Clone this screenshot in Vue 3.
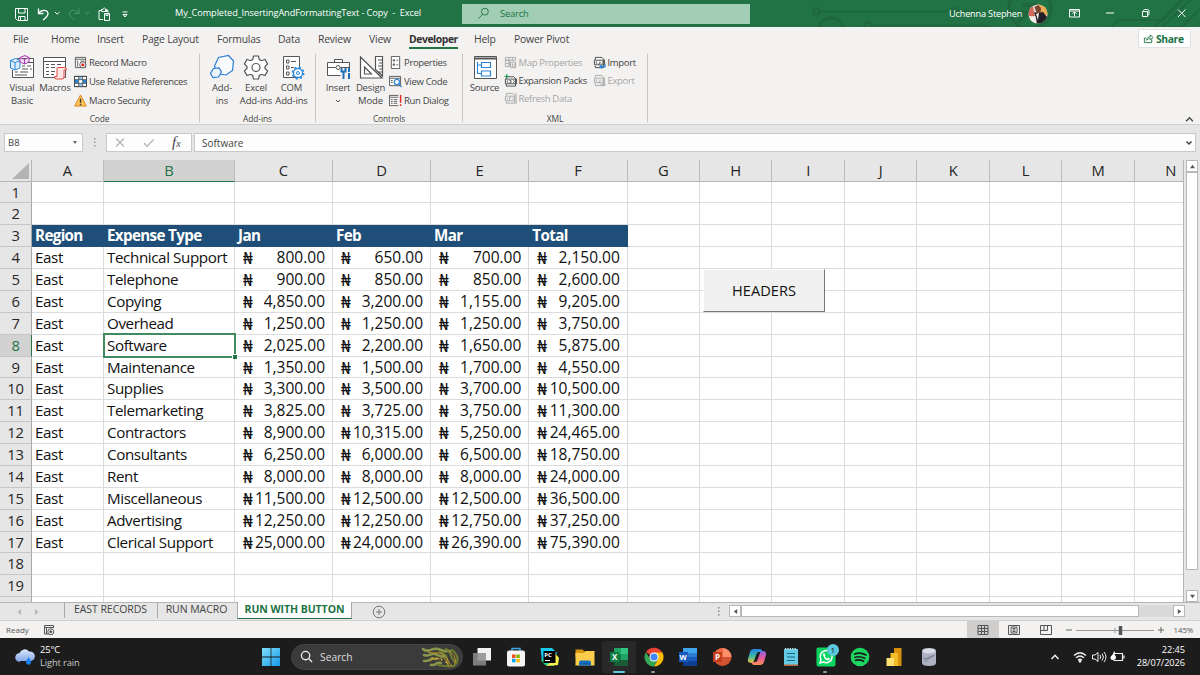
<script setup>
const menu = ['File', 'Home', 'Insert', 'Page Layout', 'Formulas', 'Data', 'Review', 'View', 'Developer', 'Help', 'Power Pivot']

const columns = ['A', 'B', 'C', 'D', 'E', 'F', 'G', 'H', 'I', 'J', 'K', 'L', 'M', 'N']

const headings = ['Region', 'Expense Type', 'Jan', 'Feb', 'Mar', 'Total']

const expenses = [
  ['East', 'Technical Support', '800.00', '650.00', '700.00', '2,150.00'],
  ['East', 'Telephone', '900.00', '850.00', '850.00', '2,600.00'],
  ['East', 'Copying', '4,850.00', '3,200.00', '1,155.00', '9,205.00'],
  ['East', 'Overhead', '1,250.00', '1,250.00', '1,250.00', '3,750.00'],
  ['East', 'Software', '2,025.00', '2,200.00', '1,650.00', '5,875.00'],
  ['East', 'Maintenance', '1,350.00', '1,500.00', '1,700.00', '4,550.00'],
  ['East', 'Supplies', '3,300.00', '3,500.00', '3,700.00', '10,500.00'],
  ['East', 'Telemarketing', '3,825.00', '3,725.00', '3,750.00', '11,300.00'],
  ['East', 'Contractors', '8,900.00', '10,315.00', '5,250.00', '24,465.00'],
  ['East', 'Consultants', '6,250.00', '6,000.00', '6,500.00', '18,750.00'],
  ['East', 'Rent', '8,000.00', '8,000.00', '8,000.00', '24,000.00'],
  ['East', 'Miscellaneous', '11,500.00', '12,500.00', '12,500.00', '36,500.00'],
  ['East', 'Advertising', '12,250.00', '12,250.00', '12,750.00', '37,250.00'],
  ['East', 'Clerical Support', '25,000.00', '24,000.00', '26,390.00', '75,390.00'],
]

// rows 1-2 are empty, row 3 holds the headings, the data starts in row 4
const rows = Array.from({ length: 20 }, (_, i) => {
  const number = i + 1
  let cells = []
  if (number === 3) cells = headings
  else if (number > 3) cells = expenses[number - 4] || []
  return { number, cells }
})
</script>

<template>
  <div class="screen">
    <header class="titlebar">
      <svg class="titlebar__art" viewBox="0 0 400 27" fill="none" stroke="#1f673f" stroke-width="2">
        <circle cx="16.500" cy="11.500" r="3" />
        <path d="M20 11.500H180M71 25.500H188l14 10M205 11.500h30" />
        <circle cx="31" cy="31" r="13" stroke-width="3" />
        <circle cx="68" cy="26" r="3.500" />
        <circle cx="155" cy="11" r="3" />
        <circle cx="230" cy="8" r="21" stroke-width="3.500" />
        <path d="m218 22 16-16m-12-1h13v13" stroke-width="4" />
        <path d="m311 27 7-7h45l22-22M354 27l28-28M362 27l36-34M370 27h12l18-18" />
      </svg>
      <div class="quick">
        <svg viewBox="0 0 120 27" fill="none" stroke="#fff" stroke-width="1">
          <path d="M6 8.500h11.500V20.500H7.500L5.500 18.500V8.500zM8.500 8.500v4.500h6.500V8.500M8.500 20.500v-4h6.500v4M10.500 17v3" />
          <path d="M28.500 8.500v5h5M28.500 13.500c3-4.500 9-4 9.500 0 .3 2.500-2 4-5 6.500" stroke-width="1.300" />
          <path d="m45 12 2.200 2.200L49.500 12" />
          <g stroke="#4f9670"><path d="M69 8.500v5h-5M69 13.500c-3-4.500-9-4-9.500 0-.3 2.500 2 4 5 6.500" /><path d="m75 12 2.200 2.200L79.500 12" /></g>
          <path d="M92 10.500h-3v9h4M95 10.500h3v2M91.500 11.500v-2h1.500c0-2 2.500-2 2.500 0H97v2zM94.500 13.500h5v7h-5zM96 13.500v2h2v-2" />
          <path d="M112.500 12h5M113 14.500h4L115 17z" />
        </svg>
      </div>
      <div class="titlebar__name">My_Completed_InsertingAndFormattingText - Copy&nbsp; -&nbsp; Excel</div>
      <div class="titlebar__search">
        <svg viewBox="0 0 14 14" fill="none" stroke="#217346"><circle cx="8.500" cy="5" r="3.700" /><path d="M6 8 1.500 12.500" /></svg>
        <span>Search</span>
      </div>
      <div class="titlebar__user">Uchenna Stephen</div>
      <svg class="avatar" viewBox="0 0 20 20">
        <defs><clipPath id="face"><circle cx="10" cy="10" r="9.500" /></clipPath></defs>
        <g clip-path="url(#face)">
          <path fill="#e9d8cf" d="M0 0h20v20H0z" />
          <path fill="#ecac56" d="M9 0h11v11H11z" />
          <path fill="#d2685b" d="M0 3h5l2 9H0z" />
          <path fill="#231f27" d="m6 8 4 1 5-1 4 5v7H9l-1-6z" />
          <path fill="#76452f" d="M6.500 3 10 1l3 3-.5 5-3.500 1z" />
          <path fill="#f3eeec" d="m8 10 3-1-1 7zM2 14l5-2 1 8H2z" />
        </g>
      </svg>
      <svg class="window-buttons" viewBox="0 0 134 27" fill="none" stroke="#fff">
        <path d="M3.500 9.500h10v7.500h-10zM3.500 11h10M8.500 16v-4M6.500 13.800l2-2 2 2M40 13h8" />
        <path d="M76.500 11.500h5v5h-5zM77.500 10.500q0-1 1-1h3q1.500 0 1.500 1.500v3q0 1-1 1M112 9.500l7.500 7.500M119.500 9.500 112 17" />
      </svg>
    </header>

    <nav class="menu">
      <span v-for="item in menu" :key="item" :class="{ 'menu__item--active': item === 'Developer' }">{{ item }}</span>
      <button type="button" class="share">
        <svg viewBox="0 0 12 12" fill="none" stroke="#217346"><path d="M3.500 5.500h-2v5h8V7M4 8c0-3 2-4 4-4V2l3 3-3 2.500V6C6.500 6 5 6.500 4 8z" /></svg>
        Share
      </button>
    </nav>

    <section class="ribbon">
      <div class="group group--code">
        <div class="group__body">
          <div class="large large--vb">
            <svg viewBox="0 0 26 26" fill="none" stroke="#555">
              <path fill="#fff" d="M8 4.500h16.500v19H3.500V16" />
              <path d="M13 8.500h11M13 12h3m2 0h4M13 15h6m2 0h2M6 18h3m2 0h8M6 21h12" />
              <path fill="#d9edfb" stroke="#2b88d8" d="m1.500 6.500 5-2 4.500 2V14l-5 2-4.500-2zM1.500 6.500l4.500 2 5-2M6 8.500V16" />
              <path fill="#f2dff5" stroke="#a83cb5" d="m11 3.500 5-2 4 2V8l-4.500 2L11 8zM11 3.500l4.500 2 4.500-2M15.500 5.500V10" />
            </svg>
            <span>Visual<br />Basic</span>
          </div>
          <div class="large large--macros">
            <svg viewBox="0 0 26 26" fill="none" stroke="#555">
              <path fill="#fff" d="M1.500 3.500h22v20h-22zM1.500 7.500h22" />
              <path d="M4 10.500h3m2 0h4m2 0h4M4 13.500h3m2 0h4M4 17.500h3m2 0h4M4 20.500h3m2 0h3" />
              <path fill="#fde7e5" stroke="#e8453c" d="M15.500 13.500h7q2 0 2 2.500H22v7q0 2-2 2h-6q-1.500 0-1.500-2.500H15v-7q0-2 .5-2z" />
            </svg>
            <span>Macros</span>
          </div>
          <div class="list">
            <div>
              <svg viewBox="0 0 14 14" fill="none" stroke="#555"><path fill="#fff" d="M1.500 1.500h11v11h-11zM1.500 3.500h11M4 5.500v6M7 5.500h4M3 5.500h1" /><circle cx="9.500" cy="9.500" r="3.300" fill="#fff" /><circle cx="9.500" cy="9.500" r="1.700" fill="#e02b20" stroke="none" /></svg>
              Record Macro
            </div>
            <div>
              <svg viewBox="0 0 14 14" fill="none" stroke="#444"><path fill="#fff" d="M.5 1.500h13v11H.5z" /><path fill="#2b88d8" stroke="none" d="M.5 5h4v4h-4zM9.500 5h4v4h-4z" /><path fill="#8cc3ee" stroke="none" d="M5 1.500h4V5H5zM5 9h4v3.500H5z" /><path d="M.5 1.500h13v11H.5zM.5 5h13M.5 9h13M5 1.500v11M9.300 1.500v11" stroke-width=".8" /></svg>
              Use Relative References
            </div>
            <div>
              <svg viewBox="0 0 14 14"><path fill="#fcc65b" stroke="#e28018" d="m7 1 6.300 12H.7z" /><path stroke="#333" stroke-width="1.500" d="M7 5v4.500M7 10.500V12" /></svg>
              Macro Security
            </div>
          </div>
        </div>
        <div class="group__name">Code</div>
      </div>

      <div class="group group--addins">
        <div class="group__body">
          <div class="large large--add">
            <svg viewBox="0 0 26 26" fill="none" stroke="#2b7cd3" stroke-width="1.200"><path fill="#f8fbfe" d="m5.500 12 4-8.500 10-2 5 5.500-1 9.500-6.500 4.500-8-1z" /><path fill="#eef6fd" d="m4.500 14.500 5.500-.5 2.500 4-3 5-5.500.5-2.500-4z" /></svg>
            <span>Add-<br />ins</span>
          </div>
          <div class="large large--excel">
            <svg viewBox="0 0 26 26" fill="none" stroke="#555" stroke-width="1.200"><path fill="#fff" d="M10.500 2h5l.8 3.500 2.200 1.200L22 5.500l2.600 4.400L22 12.500v2l2.600 2.600L22 21.500l-3.500-1.200-2.200 1.200-.8 3.500h-5l-.8-3.500-2.200-1.200L4 21.500l-2.600-4.400L4 14.500v-2L1.400 9.900 4 5.500l3.500 1.200 2.200-1.200z" /><circle cx="13" cy="13.500" r="4" /></svg>
            <span>Excel<br />Add-ins</span>
          </div>
          <div class="large large--com">
            <svg viewBox="0 0 26 26" fill="none" stroke="#555"><path fill="#fff" d="M4.500 2.500h16v21h-16zM7.500 6h2.500v3H7.500zM7.500 12h2.500v3H7.500zM7.500 18h2.500v3H7.500zM12 7.500h5M12 13.500h3" /><g stroke="#2b88d8"><circle cx="19" cy="19" r="4.500" fill="#fff" stroke-width="1.300" /><circle cx="19" cy="19" r="1.500" /><circle cx="19" cy="19" r="5.700" stroke-dasharray="2.200 2.270" stroke-width="1.500" /></g></svg>
            <span>COM<br />Add-ins</span>
          </div>
        </div>
        <div class="group__name">Add-ins</div>
      </div>

      <div class="group group--controls">
        <div class="group__body">
          <div class="large large--insert">
            <svg viewBox="0 0 26 26" fill="none" stroke="#555"><path fill="#fff" d="M2.500 8.500h22v13h-22zM9.500 8.500v-3h8v3M2.500 13.500h8m5 0h9" /><circle cx="13" cy="13.500" r="2" /><path fill="#f3f2f1" stroke="none" d="M15.500 14h11v12h-11z" /><path stroke="#2171b5" stroke-width="2" d="M18.500 18v7M16.500 14v3.500h4V14M24 14v4M24 19v6" /></svg>
            <span>Insert</span>
            <svg class="caret" viewBox="0 0 6 4" fill="none" stroke="#555"><path d="m1 1 2 2 2-2" /></svg>
          </div>
          <div class="large large--design">
            <svg viewBox="0 0 26 26" fill="none" stroke="#555" stroke-width="1.200"><path fill="#fff" d="M2.500 3v21H24zM6.500 13v7h7zM17.500 2.500h7V22l-7-6.500zM20 6h4M21 9h3M20 12h4M21 15h3M20 18h4" /></svg>
            <span>Design<br />Mode</span>
          </div>
          <div class="list">
            <div>
              <svg viewBox="0 0 14 14" fill="none" stroke="#555"><path fill="#fff" d="M2.500.5h9v13h-9zM4.500 4h1.500v1.500H4.500zM4.500 8.500h1.500V10H4.500zM8 4.500h2M8 9.500h2" /></svg>
              Properties
            </div>
            <div>
              <svg viewBox="0 0 14 14" fill="none" stroke="#555"><path fill="#fff" d="M.5 1.500h12v10H.5zM.5 3.500h12M2 6h2M2 8h2" /><circle cx="8.500" cy="7.500" r="2.800" stroke="#2b88d8" fill="#fff" stroke-width="1.300" /><path stroke="#2b88d8" stroke-width="1.300" d="m10.500 9.500 3 3.500" /></svg>
              View Code
            </div>
            <div>
              <svg viewBox="0 0 14 14" fill="none" stroke="#555"><path fill="#fff" d="M10 1.500H.5v11H10M.5 3.500H10M2 6h2m1 0h4M2 8h2m1 0h4M2 10h2m1 0h4" /><path stroke="#e02b20" stroke-width="1.600" d="M12.500 1v8.500M12.500 11v2" /></svg>
              Run Dialog
            </div>
          </div>
        </div>
        <div class="group__name">Controls</div>
      </div>

      <div class="group group--xml">
        <div class="group__body">
          <div class="large large--source">
            <svg viewBox="0 0 26 26" fill="none" stroke="#555"><path fill="#fff" d="M2.500 2.500h22v22h-22z" /><path stroke-width="2" d="M2.500 4.500h22" /><path stroke="#2b88d8" stroke-width="1.200" d="M9.500 8.500h9v5h-9zM9.500 17h9v5h-9zM9.500 11h-4v8.500h4M5.500 11V8" /></svg>
            <span>Source</span>
          </div>
          <div class="list list--tight">
            <div class="disabled">
              <svg viewBox="0 0 14 14" fill="none" stroke="#aaa"><path d="M1.500 1.500h11v3h-11zM1.500 4.500h4v7h-4zM5.500 1.500v10M9 1.500v3M1.500 8h4M7 6.500h5.500v6H7zM9 8v4M11 8v4" /></svg>
              Map Properties
            </div>
            <div>
              <svg viewBox="0 0 14 14" fill="none" stroke="#444"><path fill="#fff" d="M2.500 5V3h8l2 2v8h-10v-2M1.500 5.500h12v5h-12zM4.500 7 3 8l1.500 1.500M6 9.500h1.500V7H6M10 7l1.500 1L10 9.500" /><path stroke="#159447" d="M3 0v5M.5 2.500h5" /></svg>
              Expansion Packs
            </div>
            <div class="disabled">
              <svg viewBox="0 0 14 14" fill="none" stroke="#aaa"><path d="M2.500 4V1.500h7l2 2V12h-9v-2M1.500 4.500h10v5h-10zM4 6 3 7l1 1M6 8.500V6h1.500M9 6l1 1-1 1M13 1v12" /></svg>
              Refresh Data
            </div>
          </div>
          <div class="list list--tight list--last">
            <div>
              <svg viewBox="0 0 14 14" fill="none" stroke="#444"><path fill="#fff" d="M2.500 4V1.500h7l2 2v9h-9v-2M1.500 4.500h11v5h-11zM4.500 6 3 7l1.500 1.500M6 8.500h1.500V6M9.500 6l1.500 1-1.500 1.500" /><path stroke="#2b88d8" stroke-width="1.300" d="M13 9v2.500H7.500M9.500 9.500l-2 2 2 2" /></svg>
              Import
            </div>
            <div class="disabled">
              <svg viewBox="0 0 14 14" fill="none" stroke="#aaa"><path d="M2.500 4V1.500h7l2 2v9h-9v-2M1.500 4.500h11v5h-11zM4.500 6 3 7l1.500 1.500M6 8.500h1.500V6M9.500 6l1.500 1-1.500 1.500M8 11.500h5M11.500 9.500l2 2-2 2" /></svg>
              Export
            </div>
          </div>
        </div>
        <div class="group__name">XML</div>
      </div>
      <svg class="collapse" viewBox="0 0 8 6" fill="none" stroke="#444" stroke-width="1.200"><path d="m1 4.500 3-3 3 3" /></svg>
    </section>

    <section class="formula">
      <div class="formula__name">B8<i></i></div>
      <svg class="formula__dots" viewBox="0 0 4 12" fill="#999"><path d="M1 1h1.500v1.500H1zM1 4.500h1.500V6H1zM1 8h1.500v1.500H1z" /></svg>
      <div class="formula__tools">
        <svg viewBox="0 0 50 14" fill="none" stroke="#b5b5b5" stroke-width="1.300"><path d="m6 2.500 8 8M14 2.500l-8 8M34 7l3 3.500 6.500-7" /></svg>
        <em>f<small>x</small></em>
      </div>
      <div class="formula__value">
        Software
        <svg viewBox="0 0 8 6" fill="none" stroke="#444" stroke-width="1.500"><path d="m1.500 1.500 2.500 2.500 2.500-2.500" /></svg>
      </div>
    </section>

    <main class="workspace">
      <div class="sheet">
        <div class="row row--letters">
          <div class="corner"><i></i></div>
          <div v-for="letter in columns" :key="letter" class="letter" :class="{ 'letter--active': letter === 'B' }"><span>{{ letter }}</span></div>
        </div>
        <div v-for="row in rows" :key="row.number" class="row" :class="{ 'row--title': row.number === 3 }">
          <div class="number" :class="{ 'number--active': row.number === 8 }"><template v-if="row.number < 20">{{ row.number }}</template></div>
          <div
            v-for="(letter, i) in columns"
            :key="letter"
            class="cell"
            :class="{ 'cell--money': i > 1 && row.number > 3 && row.cells[i], 'cell--selected': row.number === 8 && i === 1 }"
          >
            <span v-if="i > 1 && row.number > 3 && row.cells[i]" class="naira">₦</span>
            <span>{{ row.cells[i] }}</span>
          </div>
        </div>
        <button type="button" class="macro-button">HEADERS</button>
      </div>
      <div class="vscroll">
        <div class="arrow"><svg viewBox="0 0 6 4"><path d="M0 4h6L3 0z" fill="#555" /></svg></div>
        <div class="vscroll__thumb"></div>
        <div class="arrow arrow--down"><svg viewBox="0 0 6 4"><path d="M0 0h6L3 4z" fill="#555" /></svg></div>
      </div>
    </main>

    <section class="tabs">
      <div class="tabs__nav"><svg viewBox="0 0 26 8" fill="#b8b8b8"><path d="M6 1v6L2.500 4zM20 1v6l3.500-3z" /></svg></div>
      <div class="tab tab--east">EAST RECORDS</div>
      <div class="tab tab--run">RUN MACRO</div>
      <div class="tab tab--active">RUN WITH BUTTON</div>
      <svg class="tabs__add" viewBox="0 0 14 14" fill="none" stroke="#777"><circle cx="7" cy="7" r="5.800" /><path d="M7 4v6M4 7h6" /></svg>
      <svg class="tabs__dots" viewBox="0 0 4 10" fill="#888"><path d="M1 0h1.500v1.500H1zM1 3.500h1.500V5H1zM1 7h1.500v1.500H1z" /></svg>
      <div class="hscroll">
        <div class="arrow"><svg viewBox="0 0 4 6"><path d="M4 0v6L0 3z" fill="#555" /></svg></div>
        <div class="hscroll__thumb"></div>
        <div class="arrow arrow--right"><svg viewBox="0 0 4 6"><path d="M0 0v6l4-3z" fill="#555" /></svg></div>
      </div>
    </section>

    <section class="status">
      <span class="status__ready">Ready</span>
      <svg class="status__macro" viewBox="0 0 12 12" fill="none" stroke="#555"><path d="M10.500 4V1.500h-9v8.500h4M1.500 3.500h9M3.500 3.500V10" /><circle cx="7.800" cy="7.800" r="3" fill="#f3f2f1" /><circle cx="7.800" cy="7.800" r="1" fill="#444" /></svg>
      <div class="views">
        <div class="views__item--active"><svg viewBox="0 0 12 12" fill="none" stroke="#555"><path d="M1 1.500h10v9H1zM1 4.500h10M1 7.500h10M4.500 1.500v9M7.500 1.500v9" /></svg></div>
        <div><svg viewBox="0 0 12 12" fill="none" stroke="#555"><path d="M.5 1.500h11v9H.5zM3 3h6v6H3zM4.500 4.500h3M4.500 6h3M4.500 7.500h3" /></svg></div>
        <div><svg viewBox="0 0 12 12" fill="none" stroke="#555"><path d="M.5 1.500h11v9H.5zM4 1.500v5M7.500 1.500v5M.5 6.500h7" /></svg></div>
      </div>
      <svg class="zoom" viewBox="0 0 100 12" fill="none" stroke="#666"><path d="M1 6h6M93 6h6M96 3v6" /><path stroke="#999" d="M11 6.500h78M50 4v5" /><path stroke="#555" stroke-width="3.500" d="M55.500 2v9" /></svg>
      <span class="status__percent">145%</span>
    </section>

    <footer class="taskbar">
      <svg class="weather" viewBox="0 0 20 20">
        <defs>
          <linearGradient id="cloud" x2="0" y2="1"><stop stop-color="#dce6fc" /><stop offset="1" stop-color="#7ca3e8" /></linearGradient>
        </defs>
        <path fill="url(#cloud)" d="M5 15a4.500 4.500 0 0 1-.5-9A5.500 5.500 0 0 1 14 4.500 4.500 4.500 0 0 1 16 14H5z" />
        <path fill="#1680ee" d="m13.500 10 2.500 4.500c1 4-5.500 4.500-5 0z" />
      </svg>
      <div class="taskbar__weather">25°C<br /><span>Light rain</span></div>
      <svg class="start" viewBox="0 0 20 20">
        <defs><linearGradient id="win" x2="1" y2="1"><stop stop-color="#7ce0fb" /><stop offset="1" stop-color="#1698e8" /></linearGradient></defs>
        <path fill="url(#win)" d="M1 1h8.600v8.600H1zM10.400 1H19v8.600h-8.600zM1 10.400h8.600V19H1zM10.400 10.400H19V19h-8.600z" />
      </svg>
      <div class="taskbar__search">
        <svg class="lens" viewBox="0 0 14 14" fill="none" stroke="#eee" stroke-width="1.400"><circle cx="6" cy="6" r="4.500" /><path d="m9.500 9.500 3.500 3.500" /></svg>
        <span>Search</span>
        <svg class="dragon" viewBox="0 0 38 22" fill="none" stroke-linecap="round">
          <path stroke="#87964a" stroke-width="2.500" d="M2 3c5 5 9-2 15 0s7 3 12 2M3 9c5 2 7-2 11-1s6 4 11 2M3 15c5 1 7-4 12-2M10 19c4 1 5-3 10-2" />
          <path stroke="#6b7a32" stroke-width="2.200" d="M25 3c5 2 4 6 6 9s5 5 2 8M31 4c5 4 7 9 4 14M19 6c6 1 8 6 8 13M17 19c5 1 9 2 15 1" />
          <path stroke="#c99b28" stroke-width="1" d="M7 6c7 3 8-1 14 2s6 9 10 12M9 15c4-5 8 0 12-3M28 5c6 4 7 8 6 12M23 12c3 3 3 7 5 8" />
          <path stroke="#e3b83c" stroke-width="1.600" stroke-dasharray=".1 5" d="M11 12c8-1 8 2 18 6" />
        </svg>
      </div>
      <div class="apps">
        <div>
          <svg viewBox="0 0 20 20"><path fill="#f2f2f2" d="M5.500 1H19v12.500H5.500z" /><path fill="#8e8e8e" fill-opacity=".85" d="M1 6h13v12.500H1z" /></svg>
        </div>
        <div>
          <svg viewBox="0 0 20 20"><path fill="none" stroke="#38a8e8" stroke-width="1.500" d="M6 4V1.500h8V4" /><rect x="1" y="3.500" width="18" height="16" rx="2" fill="#f4f5f6" /><path fill="#f25022" d="M6 7.500h3.500V11H6z" /><path fill="#7fba00" d="M10.300 7.500h3.500V11h-3.500z" /><path fill="#00a4ef" d="M6 11.800h3.500v3.500H6z" /><path fill="#ffb900" d="M10.300 11.800h3.500v3.500h-3.500z" /></svg>
        </div>
        <div>
          <svg viewBox="0 0 20 20"><path fill="#17c9ec" d="M.5 1H12l5 5-5 9-10-1z" /><path fill="#21d789" d="M1 13 12 6l2 13-9-1z" /><path fill="#f6ef4c" d="m14 5 5 6-1 7-12 1 7-6z" /><path fill="#000" d="M3.500 4h12v12h-12z" /><text x="4.300" y="9.500" fill="#fff" font-size="6" font-weight="700">PC</text><path fill="#fff" d="M5 13h5v1H5z" /></svg>
        </div>
        <div>
          <svg viewBox="0 0 20 20"><path fill="#d99510" d="M.5 2.500h7l2 2h8V10H.5z" /><path fill="#fccd4b" d="M.5 6h8l2-2h9v14.500H.5z" /><path fill="#1470be" d="M4 18.500v-3q0-2 2-2h8q2 0 2 2v3z" /><path fill="#0e5ca3" d="M6 16h8v1.200H6z" /></svg>
        </div>
        <div class="apps__item--active">
          <svg viewBox="0 0 20 20"><path fill="#21a366" d="M5 1h14v18H5z" /><path fill="#33c481" d="M12 1h7v6h-7z" /><path fill="#107c41" d="M5 7h7v6H5z" /><path fill="#185c37" d="M5 13h14v6H5z" /><path fill="#107c41" d="M1 5h9v10H1z" /><text x="3" y="13" fill="#fff" font-size="8" font-weight="700">X</text></svg>
        </div>
        <div class="apps__item--running">
          <svg viewBox="0 0 20 20"><path fill="#ea4335" d="M10 10 2 5.200A9.400 9.400 0 0 1 18.200 5.500z" /><path fill="#fbbc05" d="M10 5.500h8.400A9.400 9.400 0 0 1 10 19.400L14 12z" /><path fill="#34a853" d="M1.900 5.200A9.400 9.400 0 0 0 10 19.400L14 12l-8 0z" /><circle cx="10" cy="10" r="4.600" fill="#fff" /><circle cx="10" cy="10" r="3.600" fill="#4285f4" /></svg>
        </div>
        <div>
          <svg viewBox="0 0 20 20"><path fill="#41a5ee" d="M5 1h14v5H5z" /><path fill="#2b7cd3" d="M5 6h14v4H5z" /><path fill="#185abd" d="M5 10h14v4H5z" /><path fill="#103f91" d="M5 14h14v5H5z" /><path fill="#185abd" d="M1 5h9v10H1z" /><text x="1.600" y="12.800" fill="#fff" font-size="7.500" font-weight="700">W</text></svg>
        </div>
        <div>
          <svg viewBox="0 0 20 20"><circle cx="10.500" cy="10" r="9" fill="#d35230" /><path fill="#ff8f6b" d="M10.500 1a9 9 0 0 1 9 9h-9z" /><path fill="#ed6c47" d="M10.500 1a9 9 0 0 0-9 9h9z" /><path fill="#c43e1c" d="M1 5h9v10H1z" /><text x="3" y="13" fill="#fff" font-size="8" font-weight="700">P</text></svg>
        </div>
        <div>
          <svg viewBox="0 0 20 20">
            <defs>
              <linearGradient id="copilotA" x2="0" y2="1"><stop stop-color="#2580e8" /><stop offset=".5" stop-color="#35b7a4" /><stop offset="1" stop-color="#f2c53b" /></linearGradient>
              <linearGradient id="copilotB" x2="0" y2="1"><stop stop-color="#8b64ee" /><stop offset=".5" stop-color="#e4589b" /><stop offset="1" stop-color="#fd9355" /></linearGradient>
            </defs>
            <path fill="url(#copilotA)" d="M7 2h6q2 0 2.500 3H12q-2 0-2.500 2L7 14q-.7 2-3 2-4-.5-3-4l2-7q1-3 4-3z" />
            <path fill="url(#copilotB)" d="M13 18H7q-2 0-2.500-3H8q2 0 2.500-2L13 6q.7-2 3-2 4 .5 3 4l-2 7q-1 3-4 3z" />
          </svg>
        </div>
        <div>
          <svg viewBox="0 0 20 20"><path fill="#65cbe5" d="M3 2h14v16H3z" /><path fill="#b96a3a" d="M3 17.500h14V19H3z" /><path stroke="#d8f6fd" stroke-width="1.500" stroke-dasharray="1.200 1.200" d="M4 1.800h12" /><path stroke="#146783" stroke-width="1.200" d="M6 6.500h8M6 10h8M6 13.500h8" /></svg>
        </div>
        <div class="apps__item--running">
          <svg viewBox="0 0 20 20"><rect x=".5" y=".5" width="19" height="19" rx="2" fill="#08d561" /><path fill="none" stroke="#fff" stroke-width="1.500" d="m4 16 1-3.300a6 6 0 1 1 2.500 2.300z" /><path fill="#fff" d="M7 7q1-1.500 2 0l.3 1.500-.5.700q.8 1.500 2.300 2.200l1-.8 2 1q-.5 2-2.500 1.800Q7.500 12.500 7 7z" /></svg>
          <b class="badge">1</b>
        </div>
        <div>
          <svg viewBox="0 0 20 20"><circle cx="10" cy="10" r="9.300" fill="#1ed760" /><path fill="none" stroke="#181818" stroke-width="1.700" stroke-linecap="round" d="M4.500 7q6-2 11.500 1M5 10.300q5-1.500 9.700 1M5.500 13.300q4.500-1 8 1" /></svg>
        </div>
        <div>
          <svg viewBox="0 0 20 20"><path fill="#d9910d" d="M10 1h7.500v18H10z" /><path fill="#f2bd27" d="M6.500 6H14v13H6.500z" /><path fill="#ffe070" d="M2.500 11H10v8H2.500z" /></svg>
        </div>
        <div>
          <svg viewBox="0 0 20 20"><path fill="#aeb3c1" d="M3 4q0-3 7-3t7 3v12q0 3-7 3t-7-3z" /><ellipse cx="10" cy="4" rx="6.500" ry="2.500" fill="#d9dce5" /><path fill="none" stroke="#7d8393" d="M4 11q6 2 12-3M6 15l8-7M5 13l7-4" /></svg>
        </div>
      </div>
      <svg class="tray" viewBox="0 0 80 20" fill="none" stroke="#f2f2f2" stroke-width="1.300">
        <path d="m3.500 12 3.500-3.700 3.500 3.700" stroke-width="1.500" />
        <path d="M26 8.500q6-5.500 12 0M28 10.800q4-3.500 8 0M30 13q2-1.800 4 0" />
        <circle cx="32" cy="14.200" r=".8" fill="#fff" />
        <path d="M44.500 8h2.500l3-2.500v9L47 12h-2.500zM52 8q1.500 2 0 4M54 6.500q3 3.500 0 7M56 5q4 5 0 10" stroke-width="1" />
        <path d="M67 6.500h7.500v7h-9M76 8.500v3" stroke-width="1.200" />
        <path fill="#fff" stroke="none" d="M66 4l2 3h-1.500l1.500 3q0 3-3 3t-2.500-3L65 7z" />
      </svg>
      <div class="clock">22:45<br />28/07/2026</div>
    </footer>
  </div>
</template>

<style>
body {
  overflow: hidden;
}
</style>

<style scoped>
.screen {
  display: flex;
  flex-direction: column;
  width: 1200px;
  height: 675px;
  overflow: hidden;
  font-family: 'Open Sans', 'Noto Sans', sans-serif;
  font-size: 9.5px;
  color: #444;
  background: #e6e6e6;
}

.screen * {
  box-sizing: border-box;
}

.screen svg {
  flex: none;
  display: block;
}

button {
  font-family: inherit;
}

/* title bar */
.titlebar {
  position: relative;
  flex: none;
  display: flex;
  align-items: center;
  height: 27px;
  color: #fff;
  background: #217346;
}

.titlebar__art {
  position: absolute;
  top: 0;
  left: 800px;
  width: 400px;
  height: 27px;
}

.quick {
  width: 175px;
  padding-left: 10px;
}

.quick svg {
  width: 120px;
  height: 27px;
}

.titlebar__name {
  width: 287px;
  padding-bottom: 2px;
  font-size: 9.2px;
  letter-spacing: -0.1px;
  white-space: nowrap;
}

.titlebar__search {
  display: flex;
  align-items: center;
  gap: 10px;
  width: 288px;
  height: 20px;
  padding-left: 15px;
  font-size: 9.4px;
  letter-spacing: -0.2px;
  color: #217346;
  background: #a0cdb3;
}

.titlebar__search svg {
  width: 13px;
  height: 13px;
}

.titlebar__user {
  position: relative;
  width: 79px;
  margin-left: 199px;
  font-size: 9.2px;
  letter-spacing: -0.2px;
  white-space: nowrap;
}

.avatar {
  position: relative;
  width: 20px;
  height: 20px;
}

.window-buttons {
  position: relative;
  width: 134px;
  height: 27px;
  margin-left: 18px;
}

/* ribbon tabs */
.menu {
  flex: none;
  display: grid;
  grid-template-columns: 38px 46px 45px 75px 61px 40px 51px 40px 65px 40px 624px 53px;
  height: 23px;
  padding-left: 13px;
  font-size: 10.4px;
  line-height: 24px;
  letter-spacing: -0.2px;
  white-space: nowrap;
  background: #f3f2f1;
}

.menu__item--active {
  width: 49px;
  height: 22px;
  font-weight: 700;
  letter-spacing: -0.45px;
  color: #333;
  border-bottom: 2px solid #217346;
}

.share {
  display: flex;
  align-items: center;
  gap: 2px;
  height: 19px;
  margin-top: 2px;
  padding: 0 4px;
  font-size: 10.3px;
  font-weight: 700;
  letter-spacing: -0.35px;
  color: #217346;
  background: #fff;
  border: 1px solid #e3e1df;
  border-radius: 2px;
}

.share svg {
  width: 11px;
  height: 11px;
}

/* ribbon */
.ribbon {
  flex: none;
  display: flex;
  height: 75px;
  background: #f3f2f1;
  border-bottom: 1px solid #d0d0d0;
}

.group {
  display: flex;
  flex-direction: column;
  height: 68px;
  margin-top: 4px;
  border-right: 1px solid #c8c6c4;
}

.group--code {
  width: 200px;
}

.group--addins {
  width: 116px;
}

.group--controls {
  width: 147px;
}

.group--xml {
  width: 185px;
}

.group__body {
  flex: none;
  display: flex;
  height: 57px;
}

.group__name {
  font-size: 8.4px;
  line-height: 16px;
  letter-spacing: -0.1px;
  text-align: center;
}

.large {
  flex: none;
  display: flex;
  flex-direction: column;
  align-items: center;
  line-height: 12.5px;
  letter-spacing: -0.15px;
  text-align: center;
  white-space: nowrap;
}

.large > svg:first-child {
  width: 26px;
  height: 26px;
  margin-bottom: 2px;
}

.large .caret {
  width: 6px;
  height: 4px;
  margin-top: 4px;
}

.large--vb {
  width: 34px;
  margin-left: 5px;
}

.large--macros {
  width: 32px;
}

.large--add {
  width: 34px;
  margin-left: 5px;
}

.large--excel {
  width: 34px;
}

.large--com {
  width: 37px;
}

.large--insert {
  width: 32px;
  margin-left: 6px;
}

.large--design {
  width: 33px;
}

.large--source {
  width: 35px;
  margin-left: 4px;
}

.list {
  flex: none;
  display: flex;
  flex-direction: column;
  margin: -1px 0 0 3px;
  letter-spacing: -0.32px;
}

.list div {
  display: flex;
  align-items: center;
  gap: 2px;
  height: 19px;
  white-space: nowrap;
}

.group--controls .list {
  margin-left: 2px;
}

.group--xml .list {
  width: 89px;
  margin: -1px 0 0 1.5px;
}

.group--xml .list--last {
  width: 50px;
  margin-left: 0;
}

.list--tight div {
  height: 18px;
}

.list svg {
  width: 13px;
  height: 13px;
}

.disabled {
  color: #a6a6a6;
}

.collapse {
  width: 9px;
  height: 7px;
  margin: 66px 6px 0 auto;
}

/* formula bar */
.formula {
  flex: none;
  display: flex;
  align-items: center;
  height: 35px;
  padding: 0 4px;
  background: #e6e6e6;
}

.formula > div {
  display: flex;
  align-items: center;
  height: 19px;
  background: #fdfdfd;
  border: 1px solid #c9c9c9;
}

.formula__name {
  justify-content: space-between;
  width: 79px;
  padding: 0 5px 0 3px;
}

.formula__name i {
  border: 2.5px solid transparent;
  border-top: 3px solid #666;
  border-bottom: 0;
}

.formula__dots {
  width: 4px;
  height: 12px;
  margin: 0 9px 0 10px;
}

.formula__tools {
  width: 86px;
}

.formula__tools svg {
  width: 50px;
  height: 14px;
  margin-left: 3px;
}

.formula__tools em {
  margin-left: 12px;
  font: italic 15px 'Liberation Serif', serif;
}

.formula__tools small {
  font-size: 10px;
}

.formula__value {
  flex: 1;
  justify-content: space-between;
  margin-left: 2px;
  padding: 0 2px 0 7px;
  font-size: 10px;
}

.formula__value svg {
  width: 8px;
  height: 6px;
}

/* worksheet */
.workspace {
  flex: none;
  display: flex;
  height: 442px;
}

.sheet {
  position: relative;
  width: 1184px;
  overflow: hidden;
  border-right: 1px solid #b5b5b5;
}

.row {
  display: grid;
  grid-template-rows: 100%;
  grid-template-columns: 32px 72px 131px 98px 98px 98.3px 98.5px 72.2px 72.5px 72.5px 72.5px 72.5px 72.5px 72.5px 72.5px;
  height: 21.88px;
  font-size: 15px;
  line-height: 21px;
  color: #111;
}

.row--letters {
  height: 21.5px;
}

.corner {
  display: flex;
  justify-content: flex-end;
  align-items: flex-end;
  padding: 0 2px 2px 0;
  border-right: 1px solid #b5b5b5;
  border-bottom: 1px solid #b5b5b5;
}

.corner i {
  border-left: 17px solid transparent;
  border-bottom: 16px solid #b4b4b4;
}

.letter {
  font-size: 14.8px;
  text-align: center;
  color: #262626;
  background: #e6e6e6;
  border-right: 1px solid #bcbcbc;
  border-bottom: 1px solid #b5b5b5;
}

.letter--active {
  color: #217346;
  background: #d2d2d2;
  border-bottom: 1px solid #217346;
}

.number {
  font-size: 14.8px;
  letter-spacing: -0.3px;
  text-align: center;
  color: #262626;
  background: #e6e6e6;
  border-right: 1px solid #a8a8a8;
  border-bottom: 1px solid #c6c6c6;
}

.number--active {
  color: #217346;
  background: #d2d2d2;
  border-right: 1px solid #217346;
}

.cell {
  position: relative;
  padding-left: 3px;
  font-size: 15.2px;
  letter-spacing: -0.4px;
  white-space: nowrap;
  background: #fff;
  border-right: 1px solid #dcdcdc;
  border-bottom: 1px solid #dcdcdc;
}

.cell--money {
  display: flex;
  justify-content: space-between;
  padding: 0 7px 0 8px;
  font-size: 15.5px;
  letter-spacing: 0;
}

.naira {
  width: 10px;
  font-size: 17px;
}

.cell--selected::after {
  position: absolute;
  inset: -2px -2px -2px -1px;
  z-index: 1;
  content: '';
  border: 2px solid #3f8a60;
}

.cell--selected::before {
  position: absolute;
  right: -3px;
  bottom: -3px;
  z-index: 2;
  width: 4px;
  height: 4px;
  content: '';
  background: #217346;
  border: solid #fff;
  border-width: 1px 0 0 1px;
}

.row--title .cell:nth-child(-n + 7) {
  font-weight: 700;
  letter-spacing: -0.65px;
  color: #fff;
  background: #1f4e78;
  border-color: #1f4e78;
}

.macro-button {
  position: absolute;
  top: 109px;
  left: 703px;
  width: 122px;
  height: 43px;
  padding-bottom: 2px;
  font-size: 14.6px;
  color: #111;
  background: #f0f0f0;
  border: 1px solid #fff;
  border-right: 1px solid #777;
  border-bottom: 1.5px solid #777;
}

.vscroll {
  display: flex;
  flex-direction: column;
  width: 12px;
  margin-left: 2px;
}

.arrow {
  flex: none;
  display: flex;
  align-items: center;
  justify-content: center;
  width: 12px;
  height: 12px;
  background: #fff;
  border: 1px solid #b8b8b8;
}

.arrow svg {
  width: 5px;
  height: 5px;
}

.vscroll__thumb {
  height: 398px;
  background: #fff;
  border: 1px solid #b8b8b8;
}

.arrow--down {
  margin-top: auto;
}

/* sheet tabs */
.tabs {
  flex: none;
  display: flex;
  align-items: flex-start;
  height: 19px;
  border-top: 1px solid #b5b5b5;
  border-bottom: 1px solid #cfcfcf;
}

.tabs__nav {
  width: 64px;
  padding: 5px 0 0 15px;
}

.tabs__nav svg {
  width: 26px;
  height: 8px;
}

.tab {
  height: 15px;
  font-size: 10.5px;
  line-height: 13px;
  letter-spacing: -0.05px;
  text-align: center;
  white-space: nowrap;
  border-left: 1px solid #a8a8a8;
}

.tab--east {
  width: 93px;
  padding-right: 1px;
}

.tab--run {
  width: 80px;
  padding-right: 2px;
}

.tab--active {
  width: 115px;
  height: 17px;
  margin-top: -1px;
  font-weight: 700;
  line-height: 15px;
  color: #217346;
  background: #fff;
  border-right: 1px solid #a8a8a8;
  border-bottom: 1.5px solid #217346;
}

.tabs__add {
  width: 14px;
  height: 14px;
  margin: 2px 0 0 20px;
}

.tabs__dots {
  width: 4px;
  height: 10px;
  margin: 4px 8px 0 331px;
}

.hscroll {
  display: flex;
  width: 456px;
  height: 12px;
  margin-top: 2px;
  background: #dadada;
}

.hscroll .arrow {
  width: 12px;
}

.hscroll__thumb {
  width: 398px;
  background: #fff;
  border: 1px solid #b8b8b8;
}

.arrow--right {
  margin-left: auto;
}

/* status bar */
.status {
  flex: none;
  display: flex;
  align-items: center;
  height: 17px;
  padding-left: 6px;
  font-size: 8px;
  color: #555;
  background: #f3f2f1;
}

.status__ready {
  width: 37px;
}

.status__macro {
  width: 12px;
  height: 12px;
}

.views {
  display: flex;
  margin-left: 912px;
}

.views div {
  display: flex;
  align-items: center;
  justify-content: center;
  width: 31.5px;
  height: 17px;
}

.views svg {
  width: 12px;
  height: 12px;
}

.views .views__item--active {
  background: #cfcecd;
}

.zoom {
  width: 100px;
  height: 12px;
  margin-left: 3px;
}

.status__percent {
  margin-left: 9px;
  font-size: 7.8px;
}

/* taskbar */
.taskbar {
  flex: none;
  display: flex;
  align-items: center;
  height: 37px;
  color: #fff;
  background: #1c1c1c;
}

.weather {
  width: 20px;
  height: 20px;
  margin-left: 15px;
}

.taskbar__weather {
  width: 226px;
  padding-left: 5px;
  font-size: 9.3px;
  line-height: 12.5px;
  letter-spacing: -0.1px;
}

.taskbar__weather span {
  color: #ccc;
}

.start {
  width: 20px;
  height: 20px;
}

.taskbar__search {
  display: flex;
  align-items: center;
  width: 172px;
  height: 26px;
  margin-left: 10px;
  padding-left: 8px;
  font-size: 10.3px;
  color: #ddd;
  background: #3b3b3b;
  border: 1px solid #444;
  border-radius: 13px;
}

.lens {
  width: 13px;
  height: 13px;
  margin-right: 7px;
}

.dragon {
  width: 38px;
  height: 22px;
  margin: 0 3px 0 auto;
}

.apps {
  display: flex;
  margin-left: 1.5px;
}

.apps div {
  position: relative;
  display: flex;
  align-items: center;
  justify-content: center;
  width: 34.4px;
  height: 32px;
}

.apps svg {
  width: 20px;
  height: 20px;
}

.apps__item--active {
  background: #292929;
  border-radius: 3px;
}

.apps__item--active::after,
.apps__item--running::after {
  position: absolute;
  bottom: 0;
  left: 15px;
  width: 4px;
  height: 2px;
  content: '';
  background: #999;
  border-radius: 1px;
}

.apps__item--active::after {
  left: 11px;
  width: 12px;
  background: #61cadb;
}

.badge {
  position: absolute;
  top: 3px;
  right: 4px;
  width: 12px;
  height: 12px;
  font-size: 8px;
  font-weight: 400;
  line-height: 12px;
  text-align: center;
  color: #111;
  background: #5bc8dc;
  border-radius: 50%;
}

.tray {
  width: 80px;
  height: 20px;
  margin-left: 102px;
}

.clock {
  width: 57px;
  font-size: 9.2px;
  line-height: 12.5px;
  letter-spacing: -0.05px;
  text-align: right;
}
</style>
